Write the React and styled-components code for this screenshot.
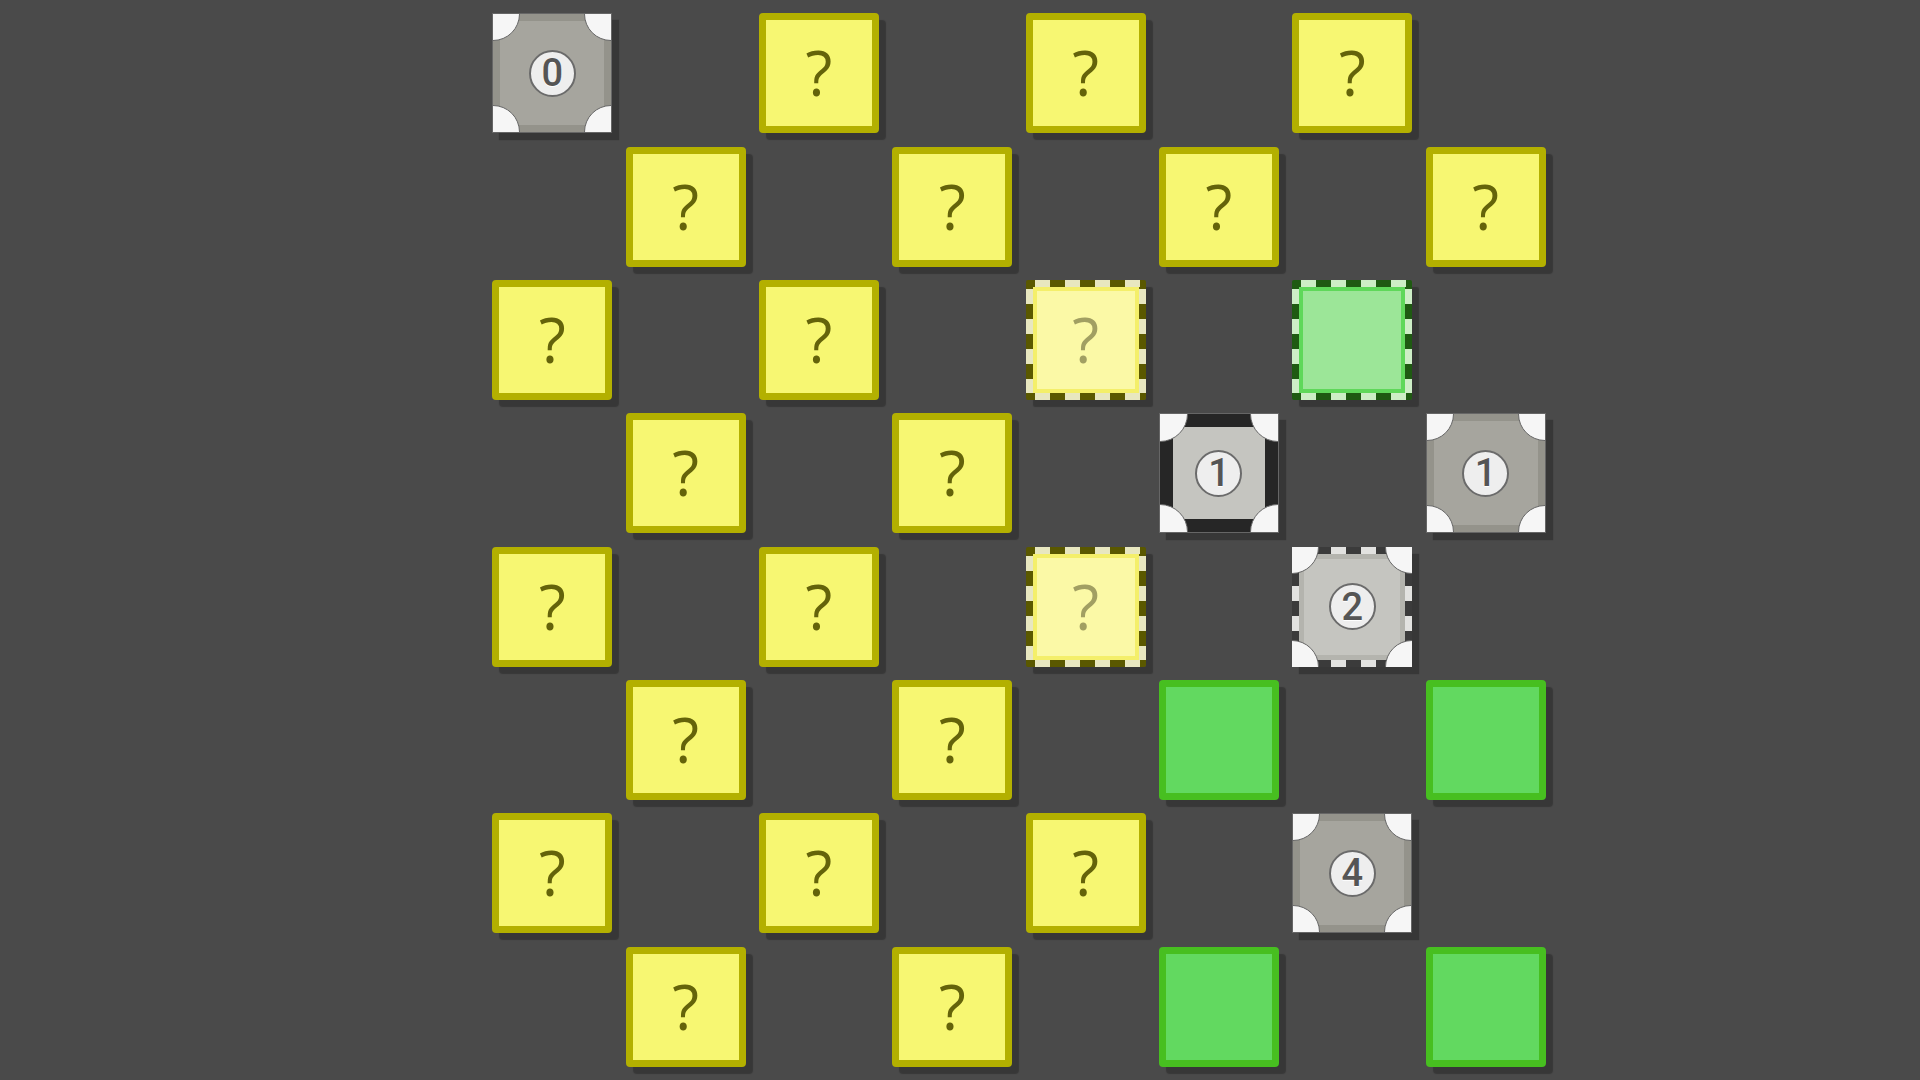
import React from "react";
import styled, { createGlobalStyle } from "styled-components";

const GlobalStyle = createGlobalStyle`
  html, body {
    margin: 0;
    padding: 0;
    background: #4a4a4a;
    overflow: hidden;
  }
`

const Page = styled.div`
  width: 1920px;
  height: 1080px;
  box-sizing: border-box;
  padding: 13.33px 0 0 492.33px;
`

const Board = styled.div`
  display: grid;
  grid-template-columns: repeat(8, 120px);
  grid-auto-rows: 120px;
  gap: 13.33px;
`

const Empty = styled.div``

const Cell = styled.div`
  width: 120px;
  height: 120px;
  box-sizing: border-box;
  position: relative;
  box-shadow: 7px 7px 1px rgba(0, 0, 0, 0.25);
`

const dashes = (dark, light) => `
  repeating-linear-gradient(90deg, ${dark} -6px, ${dark} 9px, ${light} 9px, ${light} 24px) top left / 100% 7px no-repeat,
  repeating-linear-gradient(90deg, ${dark} -6px, ${dark} 9px, ${light} 9px, ${light} 24px) bottom left / 100% 7px no-repeat,
  repeating-linear-gradient(180deg, ${dark} -6px, ${dark} 9px, ${light} 9px, ${light} 24px) top left / 7px 100% no-repeat,
  repeating-linear-gradient(180deg, ${dark} -6px, ${dark} 9px, ${light} 9px, ${light} 24px) top right / 7px 100% no-repeat
`

const Solid = styled(Cell)`
  border-radius: 4px;
  border: 7px solid ${p => p.$edge};
  background: ${p => p.$fill};
  display: flex;
  align-items: center;
  justify-content: center;
`

const DashedFrame = styled(Cell)`
  padding: 7px;
  background: ${p => dashes(p.$dark, p.$light)};
  border-radius: 2px;
`

const DashedInner = styled.div`
  width: 100%;
  height: 100%;
  box-sizing: border-box;
  border: 4px solid ${p => p.$edge};
  background: ${p => p.$fill};
  display: flex;
  align-items: center;
  justify-content: center;
`

const Mark = styled.span`
  font-family: "Open Sans", "DejaVu Sans", sans-serif;
  font-size: 62px;
  font-weight: 400;
  line-height: 1;
  color: ${p => (p.$faded ? "#a19f62" : "#64630a")};
  margin-top: -2px;
`

const NumberTile = styled(Cell)`
  overflow: hidden;
  border: ${p => (p.$variant === "dashed" ? "none" : "1px solid #666")};
  padding: ${p => (p.$variant === "dashed" ? "7px" : "0")};
  background: ${p => (p.$variant === "dashed" ? dashes("#3b3b3b", "#e2e2e0") : "none")};
`

const faces = {
  plain: { edge: "7px solid #94938b", fill: "#a6a59e" },
  selected: { edge: "13px solid #262626", fill: "#c5c5c0" },
  dashed: { edge: "5px solid #b4b4ae", fill: "#c5c5c0" },
}

const Face = styled.div`
  width: 100%;
  height: 100%;
  box-sizing: border-box;
  border: ${p => faces[p.$variant].edge};
  background: ${p => faces[p.$variant].fill};
  display: flex;
  align-items: center;
  justify-content: center;
`

const Corner = styled.div`
  position: absolute;
  width: ${p => p.$r * 2}px;
  height: ${p => p.$r * 2}px;
  box-sizing: border-box;
  border-radius: 50%;
  background: #f6f6f6;
  border: 1.5px solid #666;
  ${p => (p.$top ? "top" : "bottom")}: ${p => -p.$r}px;
  ${p => (p.$left ? "left" : "right")}: ${p => -p.$r}px;
`

const Badge = styled.div`
  width: 47px;
  height: 47px;
  box-sizing: border-box;
  border-radius: 50%;
  background: #eeeeee;
  border: 2px solid #6b6b6b;
  display: flex;
  align-items: center;
  justify-content: center;
  font-family: Roboto, "DejaVu Sans", sans-serif;
  font-weight: 500;
  font-size: 38px;
  line-height: 1;
  color: #555555;
  text-shadow: 0 1px 0 #ffffff;
`

function Question({ faded }) {
  if (faded) {
    return (
      <DashedFrame $dark="#5a5800" $light="#e8e7c0">
        <DashedInner $edge="#f4ef6a" $fill="#fbf9a6">
          <Mark $faded>?</Mark>
        </DashedInner>
      </DashedFrame>
    )
  }
  return (
    <Solid $edge="#b3b000" $fill="#f7f772">
      <Mark>?</Mark>
    </Solid>
  )
}

function Green({ dashed }) {
  if (dashed) {
    return (
      <DashedFrame $dark="#1f5a12" $light="#cdeec6">
        <DashedInner $edge="#5fd85a" $fill="#9ce698" />
      </DashedFrame>
    )
  }
  return <Solid $edge="#47bf20" $fill="#62d960" />
}

function Numbered({ value, variant }) {
  const r = variant === "selected" ? 28 : 27
  return (
    <NumberTile $variant={variant}>
      <Face $variant={variant}>
        <Badge>{value}</Badge>
      </Face>
      <Corner $r={r} $top $left />
      <Corner $r={r} $top />
      <Corner $r={r} $left />
      <Corner $r={r} />
    </NumberTile>
  )
}

// q = unknown, qd = unknown marked, g = green, gd = green marked, n* = number
const layout = [
  ["n0", null, "q", null, "q", null, "q", null],
  [null, "q", null, "q", null, "q", null, "q"],
  ["q", null, "q", null, "qd", null, "gd", null],
  [null, "q", null, "q", null, "ns1", null, "n1"],
  ["q", null, "q", null, "qd", null, "nd2", null],
  [null, "q", null, "q", null, "g", null, "g"],
  ["q", null, "q", null, "q", null, "n4", null],
  [null, "q", null, "q", null, "g", null, "g"],
]

function renderCell(code, key) {
  if (!code) return <Empty key={key} />
  if (code === "q") return <Question key={key} />
  if (code === "qd") return <Question key={key} faded />
  if (code === "g") return <Green key={key} />
  if (code === "gd") return <Green key={key} dashed />
  if (code.startsWith("ns")) return <Numbered key={key} value={code.slice(2)} variant="selected" />
  if (code.startsWith("nd")) return <Numbered key={key} value={code.slice(2)} variant="dashed" />
  return <Numbered key={key} value={code.slice(1)} variant="plain" />
}

export default function App() {
  return (
    <>
      <GlobalStyle />
      <Page>
        <Board>
          {layout.map((row, r) => row.map((code, c) => renderCell(code, `${r}-${c}`)))}
        </Board>
      </Page>
    </>
  )
}
